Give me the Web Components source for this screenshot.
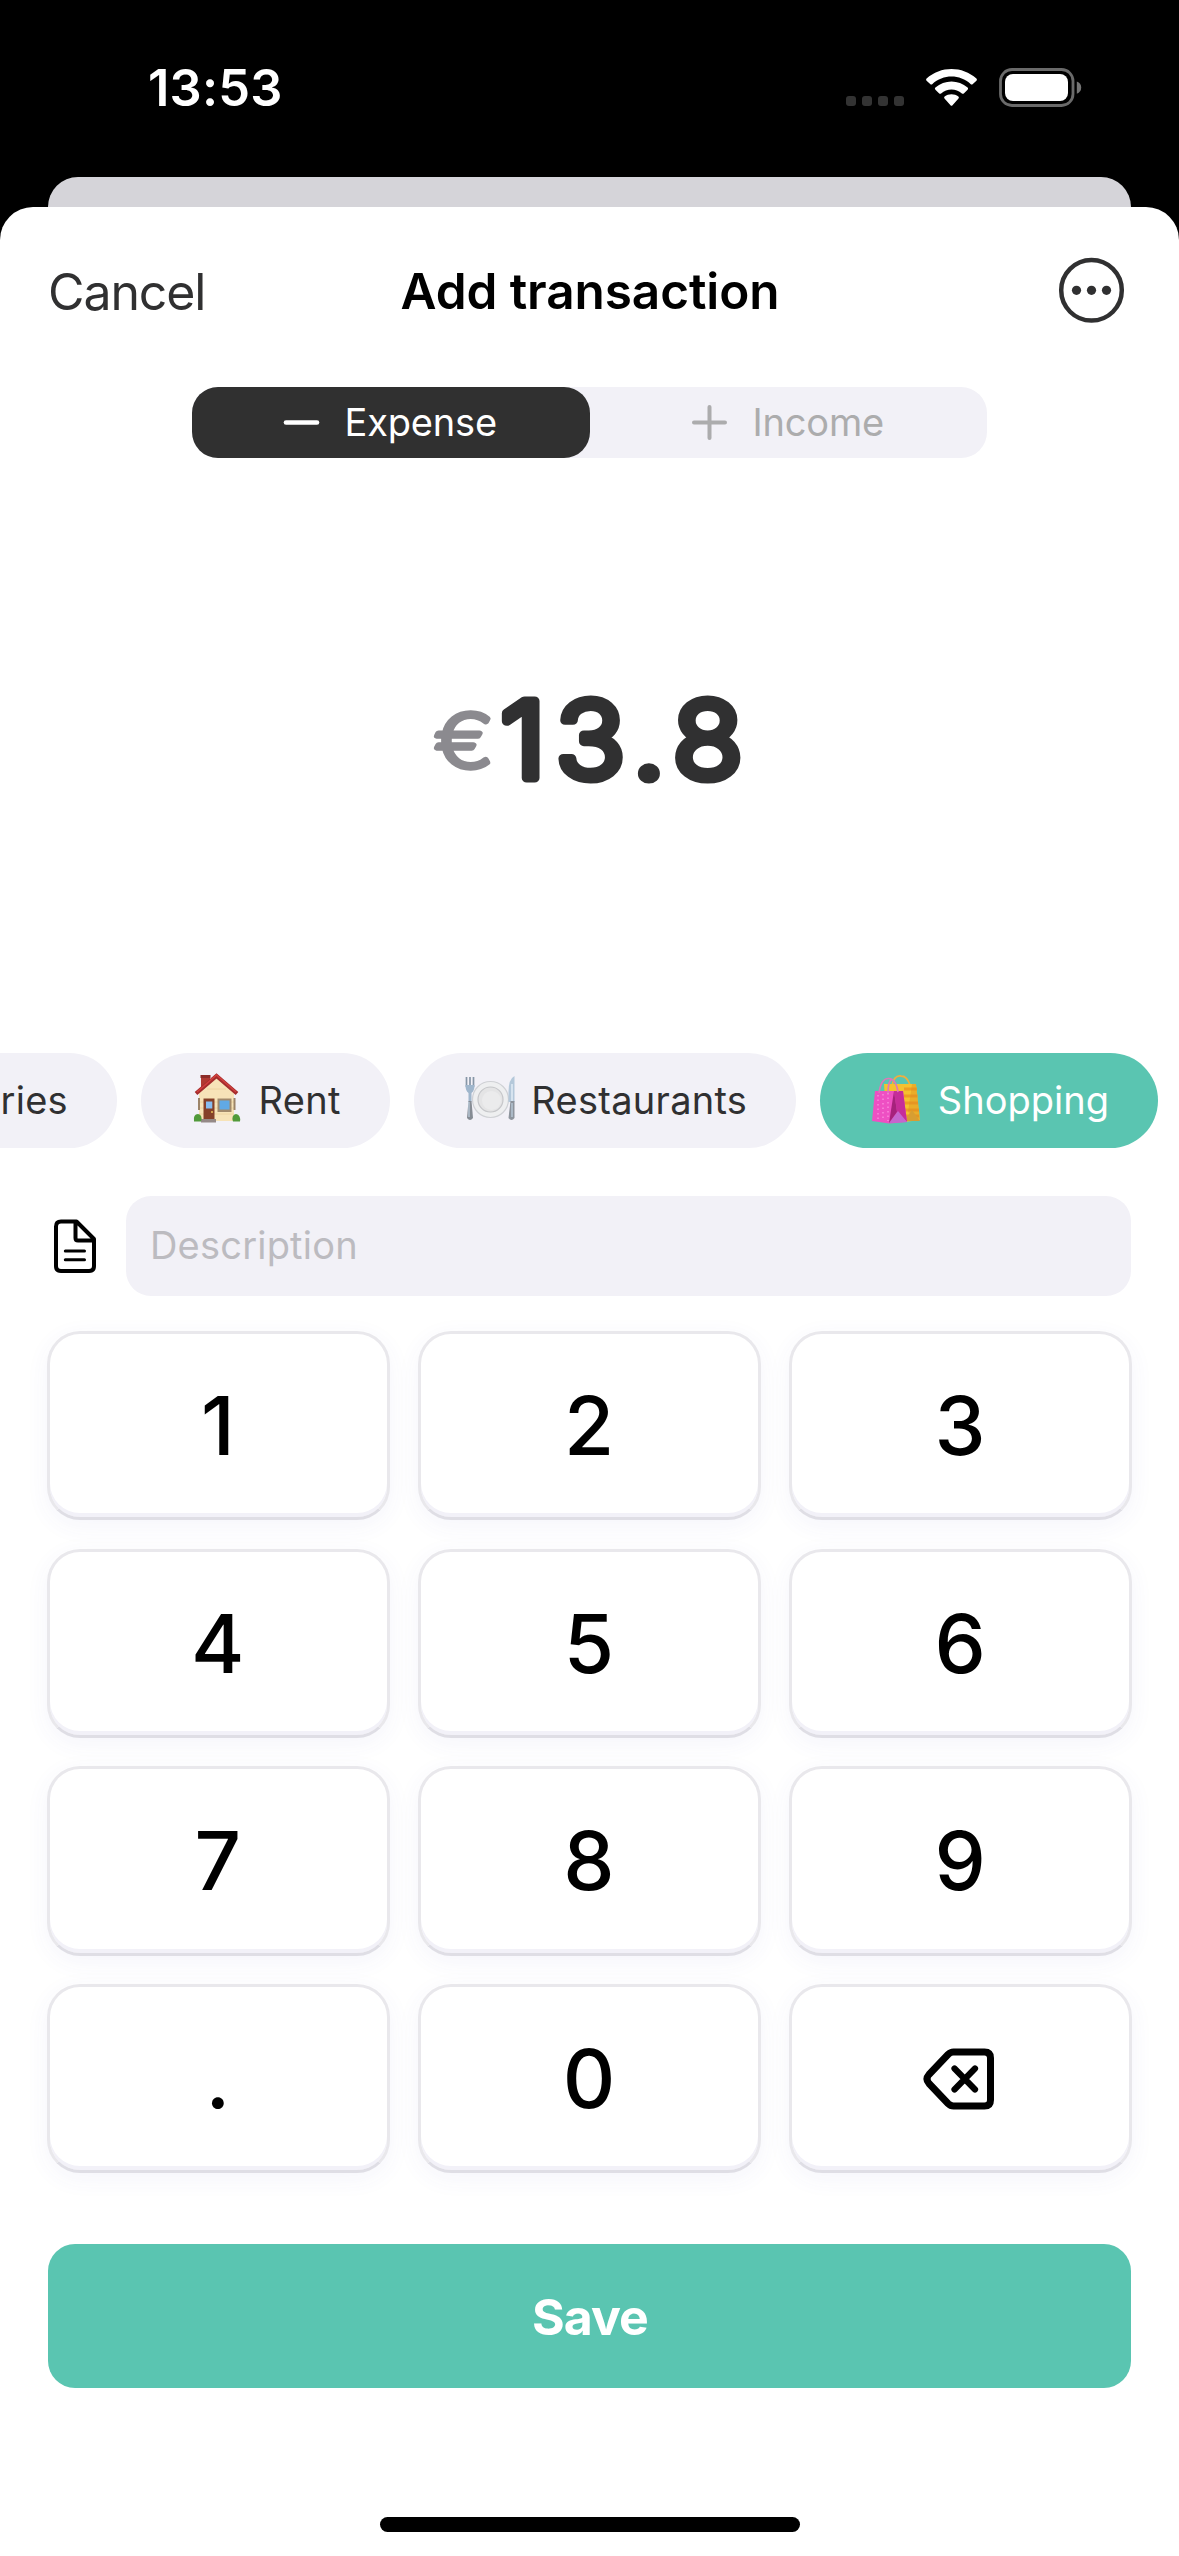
<!DOCTYPE html>
<html lang="en">
<head>
<meta charset="utf-8">
<title>Add transaction</title>
<style>
  html, body { margin: 0; padding: 0; }
  body { width: 1179px; height: 2556px; overflow: hidden; background: #000; font-family: Inter, "Liberation Sans", sans-serif; -webkit-font-smoothing: antialiased; }
</style>
</head>
<body>
<transaction-screen></transaction-screen>
<script>
const define = (name, html) => {
  const tpl = document.createElement('template');
  tpl.innerHTML = html;
  customElements.define(name, class extends HTMLElement {
    constructor() {
      super();
      this.attachShadow({ mode: 'open' }).append(tpl.content.cloneNode(true));
    }
  });
};

define('status-bar', `
<style>
  :host { display: flex; height: 177px; align-items: flex-start; justify-content: space-between; box-sizing: border-box; padding: 57px 97px 0 148px; color: #fff; }
  .time { font-size: 50.500px; line-height: 61px; font-weight: 600; letter-spacing: 0.2px; }
  .icons { display: flex; padding-top: 10px; }
  svg { display: block; }
</style>
<div class="time">13:53</div>
<div class="icons">
  <svg width="236" height="42" viewBox="846 67 236 42">
    <g fill="#333"><rect x="846" y="96" width="10" height="10" rx="3"/><rect x="862" y="96" width="10" height="10" rx="3"/><rect x="878" y="96" width="10" height="10" rx="3"/><rect x="894" y="96" width="10" height="10" rx="3"/></g>
    <g fill="#fff">
      <path d="M926.6 78.6 C940.5 65.8 962.5 65.8 976.4 78.6 Q977.4 79.6 976.4 80.7 L972.6 84.2 Q971.7 85 970.8 84.2 C959.8 74 943.2 74 932.2 84.2 Q931.3 85 930.4 84.2 L926.6 80.7 Q925.6 79.6 926.6 78.6Z"/>
      <path d="M935.4 87.6 C944.5 79.6 958.5 79.6 967.6 87.6 Q968.7 88.6 967.6 89.7 L963.8 93.4 Q962.9 94.2 961.9 93.4 C956 88.2 947 88.2 941.1 93.4 Q940.1 94.2 939.2 93.4 L935.4 89.7 Q934.3 88.6 935.4 87.6Z"/>
      <path d="M944.6 96.6 C948.6 93.4 954.4 93.4 958.4 96.6 Q959.4 97.5 958.5 98.5 L952.5 105.2 Q951.5 106.2 950.5 105.2 L944.5 98.5 Q943.6 97.5 944.6 96.6Z"/>
      <rect x="1005" y="74" width="63" height="27" rx="8"/>
    </g>
    <rect x="1000.5" y="69.5" width="72.5" height="36" rx="11.5" fill="none" stroke="#6a6a6a" stroke-width="2.8"/>
    <path d="M1076.8 81.5 Q1081.2 83 1081.2 87.6 Q1081.2 92.200 1076.800 93.700Z" fill="#757575"/>
  </svg>
</div>`);

define('sheet-header', `
<style>
  :host { display: grid; grid-template-columns: 1fr auto 1fr; align-items: center; height: 168px; padding: 0 54px 0 48px; }
  .cancel { color: #303031; font-size: 50px; letter-spacing: -1.100px; padding-top: 2px; }
  .title { color: #000; font-size: 49.5px; font-weight: 600; letter-spacing: -0.080px; padding-left: 7px; }
  svg { justify-self: end; display: block; }
</style>
<div class="cancel"><slot name="cancel"></slot></div>
<div class="title"><slot></slot></div>
<svg width="68" height="68" viewBox="0 0 68 68"><circle cx="34.500" cy="33.300" r="30.300" fill="none" stroke="#303031" stroke-width="4.500"/><g fill="#303031"><circle cx="19.500" cy="33.300" r="4.600"/><circle cx="34.500" cy="33.300" r="4.600"/><circle cx="49.500" cy="33.300" r="4.600"/></g></svg>`);

define('type-toggle', `
<style>
  :host { display: flex; width: 795px; height: 71px; margin: 12px auto 0; background: #f2f1f7; border-radius: 26px; font-size: 38px; }
  .seg { flex: 1; display: flex; align-items: center; justify-content: center; gap: 25px; color: #acacad; border-radius: 26px; letter-spacing: -0.200px; box-sizing: border-box; padding-right: 2px; }
  .on { background: #303030; color: #fff; }
  svg { display: block; }
  span { padding-bottom: 2px; }
</style>
<div class="seg on"><svg width="37" height="37" viewBox="0 0 37 37"><path d="M3 18.500H34" stroke="currentColor" stroke-width="4.600" stroke-linecap="round"/></svg><span>Expense</span></div>
<div class="seg"><svg width="37" height="37" viewBox="0 0 37 37"><path d="M3 18.500H34M18.500 3V34" stroke="currentColor" stroke-width="4" stroke-linecap="round"/></svg><span>Income</span></div>`);

define('amount-display', `
<style>
  :host { display: block; height: 595px; }
  svg { display: block; }
  text { font-family: Inter, sans-serif; stroke-linejoin: round; stroke-linecap: round; }
  .cur { font-size: 73px; font-weight: 200; fill: #8b8a8f; stroke: #8b8a8f; stroke-width: 5.500px; }
  .num { font-size: 106px; font-weight: 300; fill: #303031; stroke: #303031; stroke-width: 9.200px; letter-spacing: 9.500px; }
</style>
<svg width="1179" height="595" viewBox="0 458 1179 595">
  <text class="cur" transform="translate(434.500 767) scale(1.200 1)">€</text>
  <text class="num" transform="translate(500.500 778) scale(1.080 1)">13.8</text>
</svg>`);

define('category-chip', `
<style>
  :host { display: flex; flex: none; align-items: center; box-sizing: border-box; height: 95px; padding: 0 49px 2px; border-radius: 48px; background: #f2f1f7; color: #303031; font-size: 38px; letter-spacing: 0.280px; white-space: nowrap; }
  :host([selected]) { background: #5ac5b1; color: #fff; letter-spacing: 0; }
  ::slotted(svg) { display: block; flex: none; margin: 0 14.700px 2px 0; }
</style>
<slot name="icon"></slot><slot></slot>`);

define('category-strip', `
<style>
  :host { display: flex; justify-content: flex-end; gap: 24px; width: 1158px; overflow: hidden; }
</style>
<slot></slot>`);

define('note-field', `
<style>
  :host { display: flex; align-items: center; margin: 48px 48px 0; height: 100px; }
  .icon { width: 78px; flex: none; }
  .icon svg { display: block; margin-left: 4px; }
  .box { flex: 1; height: 100px; box-sizing: border-box; border-radius: 25px; background: #f2f1f7; display: flex; align-items: center; padding: 0 0 2px 24px; color: #bcbbc0; font-size: 38px; letter-spacing: 0.2px; }
</style>
<div class="icon"><svg width="46" height="56" viewBox="52 1218 46 56" fill="none" stroke="#000" stroke-linecap="round" stroke-linejoin="round"><path stroke-width="4" d="M61 1221.500H76.500L94 1239V1266Q94 1271 89 1271H61Q56 1271 56 1266V1226.500Q56 1221.500 61 1221.500ZM75.500 1222V1238Q75.500 1240.500 78 1240.500H93.500"/><path stroke-width="3" d="M65.300 1251H84.500M65.300 1259.800H84.500"/></svg></div>
<div class="box"><slot></slot></div>`);

define('pad-key', `
<style>
  :host { display: flex; align-items: center; justify-content: center; box-sizing: border-box; border: 3px solid #e9e8ec; border-bottom-color: #dfdee5; border-radius: 33px; padding-right: 1px; background: #fff; color: #000; font-size: 81.500px; font-weight: 500; line-height: 1; box-shadow: inset 0 -4px 0 #f2f1f8, 0 6px 24px rgba(80, 70, 190, 0.055); }
</style>
<slot></slot>`);

define('key-pad', `
<style>
  :host { display: grid; grid-template-columns: repeat(3, 1fr); grid-auto-rows: 189.300px; gap: 28.400px 28.500px; margin: 35px 47px 0; }
  .back { display: block; }
</style>
<pad-key>1</pad-key><pad-key>2</pad-key><pad-key>3</pad-key>
<pad-key>4</pad-key><pad-key>5</pad-key><pad-key>6</pad-key>
<pad-key>7</pad-key><pad-key>8</pad-key><pad-key>9</pad-key>
<pad-key>.</pad-key><pad-key>0</pad-key>
<pad-key><svg class="back" width="74" height="64" viewBox="923.500 2046.500 74 64" fill="none" stroke="#000" stroke-linecap="round" stroke-linejoin="round"><path stroke-width="7" d="M954 2051.500H985Q991 2051.500 991 2057.500V2099.500Q991 2105.500 985 2105.500H954Q951 2105.500 948.500 2103L929.500 2083Q925.500 2078.500 929.500 2074L948.500 2054Q951 2051.500 954 2051.500Z"/><path stroke-width="6.200" d="M955 2068L975.500 2089M975.500 2068L955 2089"/></svg></pad-key>`);

define('save-button', `
<style>
  :host { display: flex; align-items: center; justify-content: center; box-sizing: border-box; height: 144px; margin: 71px 48px 0; padding: 2px 0 0 1px; border-radius: 27px; background: #5ac5b1; color: #fff; font-size: 50px; font-weight: 700; letter-spacing: -1px; }
</style>
<slot></slot>`);

define('home-indicator', `
<style>:host { display: block; width: 420px; height: 15px; margin: 129px auto 0; border-radius: 8px; background: #000; }</style>`);

define('transaction-screen', `
<style>
  :host { display: flex; flex-direction: column; width: 1179px; height: 2556px; background: #000; }
  .under { height: 30px; margin: 0 48px; border-radius: 30px 30px 0 0; background: #d5d4d9; }
  .sheet { display: flex; flex-direction: column; flex: 1; background: #fff; border-radius: 33px 33px 0 0; }
</style>
<status-bar></status-bar>
<div class="under"></div>
<div class="sheet">
  <sheet-header><span slot="cancel">Cancel</span>Add transaction</sheet-header>
  <type-toggle></type-toggle>
  <amount-display></amount-display>
  <category-strip>
    <category-chip>Groceries</category-chip>
    <category-chip>
      <svg slot="icon" width="54" height="52" viewBox="190 1072 54 52">
        <path d="M201 1075h9v16h-9z" fill="#b03a32"/><path d="M200.500 1074h10v3h-10z" fill="#8c2c28"/>
        <path d="M199 1092L216.500 1076L234 1092V1120H199Z" fill="#f7e3b8"/>
        <path d="M199 1101H234M199 1107H234M199 1113H234M207 1088H226" stroke="#ecd09c" stroke-width=".8"/>
        <path d="M196 1092.500L216.500 1075L237 1092.500" fill="none" stroke="#a52c2c" stroke-width="4"/>
        <path d="M197 1091L216.500 1074L236 1091" fill="none" stroke="#d1403d" stroke-width="1.500"/>
        <path d="M203.500 1097.500h11V1119h-11z" fill="#854029"/><path d="M206 1100.500h6.300v7H206z" fill="#88bdf0"/>
        <path d="M217.500 1097.500h14V1111h-14z" fill="#a28a6c"/><path d="M219.500 1099.500h10v9h-10z" fill="#61a9e5"/>
        <path d="M199 1097v12M234.500 1097v12" stroke="#9c8469" stroke-width="2"/>
        <circle cx="212" cy="1111" r="1" fill="#eac057"/><path d="M201 1118h15v3.500h-15z" fill="#958987"/>
        <path d="M194 1120.500Q193 1113 198 1113Q203 1114 201 1120.500ZM233 1120.500Q231 1114 236 1113Q241 1114 240 1120.500Z" fill="#519a3a"/>
      </svg>Rent</category-chip>
    <category-chip>
      <svg slot="icon" width="54" height="52" viewBox="462 1072 54 52">
        <circle cx="489.500" cy="1098.500" r="18" fill="#eeeff0" stroke="#cfd1d5" stroke-width="1.200"/><circle cx="489.500" cy="1098.500" r="12.500" fill="#e4e4e5" stroke="#c5c6c9" stroke-width="1.200"/><circle cx="490.500" cy="1099.500" r="9.500" fill="#ebebec"/>
        <path d="M465.500 1076v10M469 1076v10M472.500 1076v10" stroke="#8796a6" stroke-width="1.700"/><path d="M464.500 1084h9q0 6-3 8v9h-3v-9q-3-2-3-8z" fill="#9fb6cc"/><path d="M467.500 1100h3l1.500 17q-3 4-6 0z" fill="#868c94"/><path d="M468 1101v15" stroke="#c9def0"/>
        <path d="M513.500 1075q-6 3-6 16v10h6z" fill="#b4c8da"/><path d="M511 1083v17" stroke="#e2edf6" stroke-width="1.500"/><path d="M509.500 1100h4v17q-3 4-6 0z" fill="#8d949d"/><path d="M511 1102v14" stroke="#c9def0"/>
      </svg>Restaurants</category-chip>
    <category-chip selected>
      <svg slot="icon" width="54" height="52" viewBox="869 1071 54 52">
        <path d="M892 1084Q894 1073 901 1074Q907 1074 910 1083" fill="none" stroke="#efaf3f" stroke-width="1.800"/>
        <path d="M884 1082H916L920 1118L904 1120L886 1112Z" fill="#f5c12f"/>
        <path d="M904 1087H917M904 1094H917.500M904 1101H918M904 1108H919M904 1114H919" stroke="#ee9d24" stroke-width="3"/>
        <path d="M912 1082H916L920 1118L908 1110Z" fill="#d88720" opacity=".35"/>
        <path d="M904 1119L912 1108L920 1119Z" fill="#d79e32"/>
        <path d="M875 1089H903L907 1120L889 1121.500L872 1119Z" fill="#ee50c3"/>
        <path d="M894 1089H903L907 1120L897 1110Z" fill="#c62d99"/><path d="M889 1121L898 1109L907 1120Z" fill="#c566cf"/><path d="M894 1089L897 1110L889 1121Z" fill="#a6227c"/>
        <path d="M878 1093v24M883 1092v27M888 1091v28" stroke="#fa91df" stroke-width="1.300" stroke-dasharray="1.500 3"/>
        <path d="M879 1091Q881 1076 889 1076.500Q896 1077 898 1090M888 1091Q888 1079 892 1077" fill="none" stroke="#dd78b9" stroke-width="1.700"/>
      </svg>Shopping</category-chip>
  </category-strip>
  <note-field>Description</note-field>
  <key-pad></key-pad>
  <save-button>Save</save-button>
  <home-indicator></home-indicator>
</div>`);
</script>
</body>
</html>
